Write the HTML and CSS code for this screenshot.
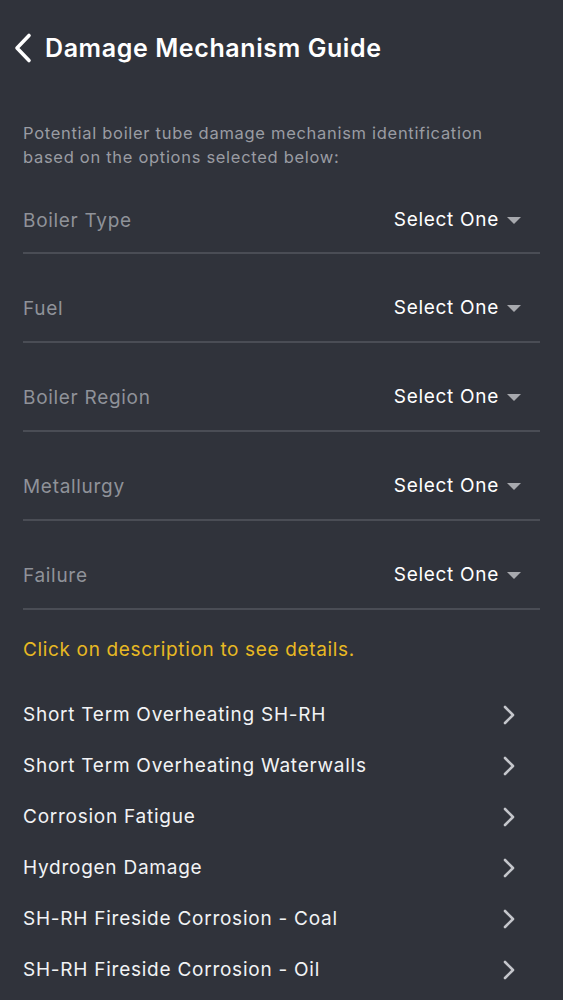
FILE: index.html
```html
<!DOCTYPE html>
<html>
<head>
<meta charset="utf-8">
<link rel="stylesheet" href="styles.css">
</head>
<body>
<div class="screen">
  <header class="nav">
    <svg class="back" width="22" height="32" viewBox="0 0 22 32"><path d="M18 3.5 L6 16 L18 28.5" fill="none" stroke="#ffffff" stroke-width="3.6" stroke-linecap="round" stroke-linejoin="round"/></svg>
    <h1 class="title">Damage Mechanism Guide</h1>
  </header>
  <main class="content">
    <p class="intro">Potential boiler tube damage mechanism identification based on the options selected below:</p>
    <div class="filters">
      <div class="filter"><span class="label">Boiler Type</span><span class="select">Select One<span class="caret"></span></span></div>
      <div class="filter"><span class="label">Fuel</span><span class="select">Select One<span class="caret"></span></span></div>
      <div class="filter"><span class="label">Boiler Region</span><span class="select">Select One<span class="caret"></span></span></div>
      <div class="filter"><span class="label">Metallurgy</span><span class="select">Select One<span class="caret"></span></span></div>
      <div class="filter"><span class="label">Failure</span><span class="select">Select One<span class="caret"></span></span></div>
    </div>
    <p class="hint">Click on description to see details.</p>
    <ul class="list">
      <li class="item"><span>Short Term Overheating SH-RH</span><svg class="chev" width="14" height="22" viewBox="0 0 14 22"><path d="M3 3 L11 11 L3 19" fill="none" stroke="#c4c6cb" stroke-width="2.6" stroke-linecap="round" stroke-linejoin="round"/></svg></li>
      <li class="item"><span>Short Term Overheating Waterwalls</span><svg class="chev" width="14" height="22" viewBox="0 0 14 22"><path d="M3 3 L11 11 L3 19" fill="none" stroke="#c4c6cb" stroke-width="2.6" stroke-linecap="round" stroke-linejoin="round"/></svg></li>
      <li class="item"><span>Corrosion Fatigue</span><svg class="chev" width="14" height="22" viewBox="0 0 14 22"><path d="M3 3 L11 11 L3 19" fill="none" stroke="#c4c6cb" stroke-width="2.6" stroke-linecap="round" stroke-linejoin="round"/></svg></li>
      <li class="item"><span>Hydrogen Damage</span><svg class="chev" width="14" height="22" viewBox="0 0 14 22"><path d="M3 3 L11 11 L3 19" fill="none" stroke="#c4c6cb" stroke-width="2.6" stroke-linecap="round" stroke-linejoin="round"/></svg></li>
      <li class="item"><span>SH-RH Fireside Corrosion - Coal</span><svg class="chev" width="14" height="22" viewBox="0 0 14 22"><path d="M3 3 L11 11 L3 19" fill="none" stroke="#c4c6cb" stroke-width="2.6" stroke-linecap="round" stroke-linejoin="round"/></svg></li>
      <li class="item"><span>SH-RH Fireside Corrosion - Oil</span><svg class="chev" width="14" height="22" viewBox="0 0 14 22"><path d="M3 3 L11 11 L3 19" fill="none" stroke="#c4c6cb" stroke-width="2.6" stroke-linecap="round" stroke-linejoin="round"/></svg></li>
    </ul>
  </main>
</div>
</body>
</html>
```
FILE: styles.css
```css
html, body {
  margin: 0;
  padding: 0;
  background: #30333b;
}
body {
  font-family: Inter, "Noto Sans", sans-serif;
  color: #ffffff;
  width: 563px;
  height: 1000px;
  overflow: hidden;
}
.screen {
  display: flex;
  flex-direction: column;
}
.nav {
  display: flex;
  align-items: center;
  height: 48px;
  padding: 24px 0 0 11px;
  gap: 12px;
}
.back {
  display: block;
}
.title {
  margin: 0;
  font-size: 25px;
  font-weight: 600;
  color: #ffffff;
  letter-spacing: 0.6px;
}
.content {
  padding: 0 23px;
}
.intro {
  margin: 49px 0 0 0;
  max-width: 490px;
  font-size: 16.5px;
  line-height: 24px;
  color: #9a9ca3;
  letter-spacing: 0.7px;
}
.filters {
  display: flex;
  flex-direction: column;
}
.filter {
  display: flex;
  justify-content: space-between;
  align-items: center;
  box-sizing: border-box;
  height: 89px;
  padding-top: 21px;
  border-bottom: 2px solid #4a4d55;
}
.filter:first-child {
  height: 85px;
  padding-top: 20px;
}
.filter .label {
  font-size: 19px;
  color: #8f9299;
  letter-spacing: 0.7px;
}
.select {
  display: flex;
  align-items: center;
  font-size: 19px;
  color: #ffffff;
  letter-spacing: 0.7px;
  margin-right: 19px;
  margin-top: -2px;
}
.caret {
  width: 0;
  height: 0;
  border-left: 7px solid transparent;
  border-right: 7px solid transparent;
  border-top: 7px solid #a7a9ae;
  margin-left: 8px;
  margin-top: 2px;
}
.hint {
  margin: 28px 0 0 0;
  font-size: 19px;
  line-height: 24px;
  color: #e8b923;
  letter-spacing: 0.65px;
}
.list {
  list-style: none;
  margin: 27px 0 0 0;
  padding: 0;
}
.item {
  display: flex;
  justify-content: space-between;
  align-items: center;
  height: 51px;
  font-size: 19px;
  color: #f2f3f5;
  letter-spacing: 0.75px;
  padding-right: 24px;
}
.chev {
  display: block;
}
```
